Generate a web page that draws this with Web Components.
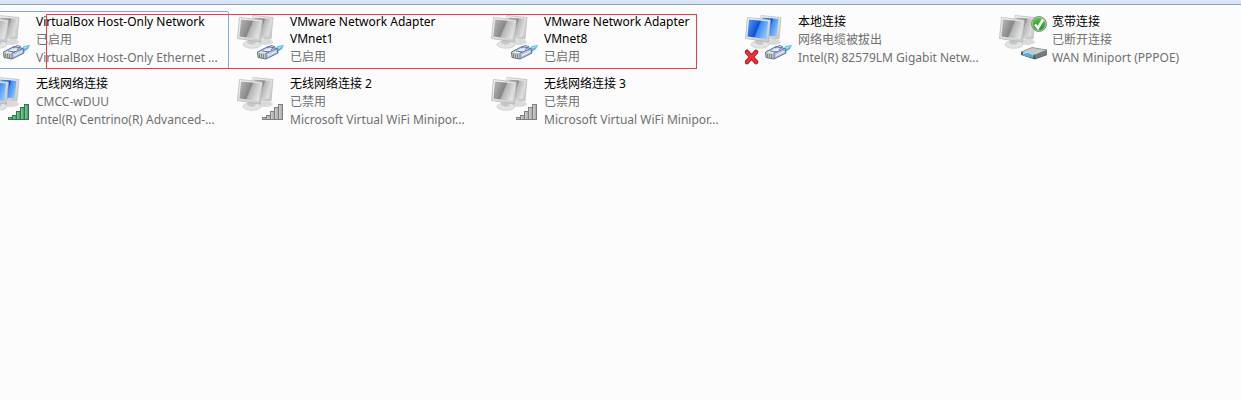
<!DOCTYPE html>
<html lang="zh-CN">
<head>
<meta charset="utf-8">
<title>网络连接</title>
<style>
html, body { margin: 0; min-height: 100vh; background: #fcfcfc; }
body { font-family: "Noto Sans", "Noto Sans CJK SC", sans-serif; font-size: 12px; }
</style>
</head>
<body>
<network-folder>
  <network-connection icon="cable" selected>
    VirtualBox Host-Only Network
    <span slot="status">已启用</span>
    <span slot="device">VirtualBox Host-Only Ethernet ...</span>
  </network-connection>
  <network-connection icon="cable">
    VMware Network Adapter VMnet1
    <span slot="status">已启用</span>
  </network-connection>
  <network-connection icon="cable">
    VMware Network Adapter VMnet8
    <span slot="status">已启用</span>
  </network-connection>
  <network-connection icon="cable" lit unplugged>
    本地连接
    <span slot="status">网络电缆被拔出</span>
    <span slot="device">Intel(R) 82579LM Gigabit Netw...</span>
  </network-connection>
  <network-connection icon="modem" default>
    宽带连接
    <span slot="status">已断开连接</span>
    <span slot="device">WAN Miniport (PPPOE)</span>
  </network-connection>
  <network-connection icon="signal" lit>
    无线网络连接
    <span slot="status">CMCC-wDUU</span>
    <span slot="device">Intel(R) Centrino(R) Advanced-...</span>
  </network-connection>
  <network-connection icon="signal">
    无线网络连接 2
    <span slot="status">已禁用</span>
    <span slot="device">Microsoft Virtual WiFi Minipor...</span>
  </network-connection>
  <network-connection icon="signal">
    无线网络连接 3
    <span slot="status">已禁用</span>
    <span slot="device">Microsoft Virtual WiFi Minipor...</span>
  </network-connection>
  <highlight-frame slot="overlay"></highlight-frame>
</network-folder>

<script>
class NetworkFolder extends HTMLElement {
  constructor() {
    super();
    this.attachShadow({ mode: 'open' }).innerHTML = `
      <style>
        :host { display: block; position: relative; overflow: hidden; }
        header { height: 4px; background: linear-gradient(#dce8f7, #d6e3f4); border-bottom: 1px solid #8ea6c4; }
        main { display: grid; grid-template-columns: repeat(auto-fill, 250px); gap: 4px; margin: 0 -8px 0 -21px; padding: 6px 0; }
      </style>
      <header></header>
      <main><slot></slot></main>
      <slot name="overlay"></slot>`;
  }
}

class HighlightFrame extends HTMLElement {
  constructor() {
    super();
    this.attachShadow({ mode: 'open' }).innerHTML = `
      <style>
        :host { position: absolute; left: 46px; top: 14px; width: 651px; height: 55px; box-sizing: border-box; border: 1px solid #f23c3c; pointer-events: none; }
      </style>`;
  }
}

class ConnectionIcon extends HTMLElement {
  connectedCallback() {
    if (this.shadowRoot) return;
    const lit = this.hasAttribute('lit');
    const kind = this.getAttribute('kind');
    const parts = {
      cable: `
        <path d="M36 39 41 34 47 33 45 37 39 41Z" fill="#4fb6de"/>
        <path d="M40 35 46 34 42 37Z" fill="#a4e2f5"/>
        <path d="M20.500 40 31 34.500 40 36.500 41 41 29 47 21 45.500Z" fill="#b9c6de" stroke="#5f7091"/>
        <path d="M21.500 40.500 31 36 38 37 29 41.500Z" fill="#e2eaf7"/>
        <path d="M29 41V46.500M29 41 39 37M25 39 32 40M30 36 34 33.500 38 34.500 34 38" fill="none" stroke="#687a9d"/>
        <path d="M22.500 41.500V45M24.500 42V45.500M26.500 42V46" stroke="#8f8a3c"/>
        <path d="M31 43.500 39 39.500" stroke="#f4f8ff"/>`,
      signal: [[25, 43, 3], [29, 41, 5], [33, 37, 9], [37, 33, 13], [41, 30, 16]].map(([x, y, h]) =>
        `<rect x="${x + .5}" y="${y + .5}" width="4" height="${h - 1}" fill="url(#bar)" stroke="${lit ? '#31764a' : '#808080'}"/>`).join(''),
      modem: `
        <path d="M22 40 33 35.500 48 38 48 43 36 47.500 22 43Z" fill="#4d5358"/>
        <path d="M22 40 33 35.500 48 38 36 43Z" fill="#c6cacc" stroke="#80868a" stroke-width=".6"/>
        <path d="M36 43.500 48 38.500V43L36 47Z" fill="#74797d"/>
        <path d="M23 42.500Q29 38 35 43L34 46 24 43.500Z" fill="#54aed9"/>
        <path d="M24 41.500Q30 39 34 43" fill="none" stroke="#c9edfa"/>`
    };
    this.attachShadow({ mode: 'open' }).innerHTML = `
      <style>
        :host { display: block; flex: none; width: 48px; height: 54px; }
        svg { display: block; }
      </style>
      <svg width="48" height="54" viewBox="0 0 48 54" aria-hidden="true">
        <defs>
          <linearGradient id="screen" x1="0" y1=".2" x2="1" y2=".6">
            ${lit
              ? '<stop offset="0" stop-color="#4f98ee"/><stop offset=".5" stop-color="#0f4fd0"/><stop offset=".56" stop-color="#3b8cf2"/><stop offset="1" stop-color="#8cc6ff"/>'
              : '<stop offset="0" stop-color="#b4b4b4"/><stop offset=".5" stop-color="#868686"/><stop offset=".56" stop-color="#b4b4b4"/><stop offset="1" stop-color="#e4e4e4"/>'}
          </linearGradient>
          <linearGradient id="case" x1="0" y1="0" x2="1" y2="1">
            <stop offset="0" stop-color="#f8f8f8"/><stop offset="1" stop-color="#c4c6c7"/>
          </linearGradient>
          <linearGradient id="bar">
            <stop offset="0" stop-color="${lit ? '#91ceaa' : '#d5d5d5'}"/><stop offset="1" stop-color="${lit ? '#369759' : '#a4a4a4'}"/>
          </linearGradient>
          <linearGradient id="check" x1="0" y1="0" x2="0" y2="1">
            <stop offset="0" stop-color="#5fc354"/><stop offset="1" stop-color="#17921a"/>
          </linearGradient>
        </defs>
        <ellipse cx="28" cy="30" rx="8" ry="3" fill="#d9dada"/>
        <path d="M16 3.500 36 5.500 34 27 15 25Z" fill="url(#case)" stroke="#b6b8b9" stroke-width=".7"/>
        <path d="M17.500 5.500 33.500 7 31.500 24.500 17 23Z" fill="url(#screen)"/>
        <ellipse cx="15" cy="32.500" rx="9" ry="3.800" fill="#e2e3e3" stroke="#c3c4c4" stroke-width=".6"/>
        <path d="M11 27 19 28 18 32Q14 34 10 31Z" fill="#c6c8c8"/>
        <path d="M2.500 5.500 25.500 8 23.500 30 .5 26.500Z" fill="url(#case)" stroke="#aeb0b1" stroke-width=".7"/>
        <path d="M4 7.500 23 9.500 21.500 27 2.500 24.500Z" fill="url(#screen)"/>
        ${parts[kind]}
        ${this.hasAttribute('unplugged') ? '<path d="M2 40 11 50M11 40 2 50" stroke="#9e1717" stroke-width="4.500" stroke-linecap="round"/><path d="M2 40 11 50M11 40 2 50" stroke="#ee3038" stroke-width="2.800" stroke-linecap="round"/>' : ''}
        ${this.hasAttribute('default') ? '<circle cx="40" cy="12" r="7.500" fill="url(#check)" stroke="#8a9690"/><circle cx="40" cy="12" r="6.500" fill="none" stroke="#bde5b9" stroke-width=".7"/><path d="M36 12.500 39 16 44 7.500" fill="none" stroke="#fff" stroke-width="2.500"/>' : ''}
      </svg>`;
  }
}

class NetworkConnection extends HTMLElement {
  connectedCallback() {
    if (this.shadowRoot) return;
    const flags = ['lit', 'unplugged', 'default'].filter(name => this.hasAttribute(name)).join(' ');
    this.attachShadow({ mode: 'open' }).innerHTML = `
      <style>
        :host { display: flex; gap: 5px; box-sizing: border-box; height: 58px; padding: 0 3px; border: 1px solid transparent; border-radius: 2px; color: #707070; line-height: 18px; }
        :host([selected]) { border-color: #84a9d4; }
        .text { flex: 1; min-width: 0; padding-top: 1px; white-space: nowrap; }
        .title { margin-bottom: 1px; color: #000; line-height: 17px; white-space: normal; }
        ::slotted(span) { display: block; }
      </style>
      <connection-icon kind="${this.getAttribute('icon')}" ${flags}></connection-icon>
      <div class="text">
        <div class="title"><slot></slot></div>
        <slot name="status"></slot>
        <slot name="device"></slot>
      </div>`;
  }
}

customElements.define('network-folder', NetworkFolder);
customElements.define('highlight-frame', HighlightFrame);
customElements.define('connection-icon', ConnectionIcon);
customElements.define('network-connection', NetworkConnection);
</script>
</body>
</html>
